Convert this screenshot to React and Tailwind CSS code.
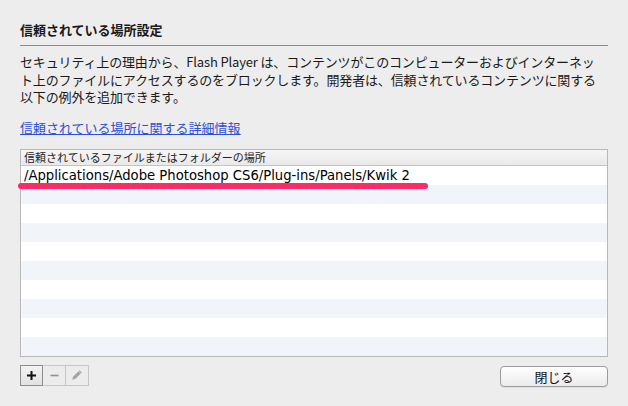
import React from 'react';

const JP = { fontFamily: '"Noto Sans CJK JP", "DejaVu Sans", sans-serif' };

function Rows() {
  const rows = Array.from({ length: 10 });
  return rows.map((_, i) => (
    <div key={i} className={`h-[19px] ${i % 2 ? 'bg-[#f1f4f9]' : 'bg-white'}`}>
      {i === 0 && (
        <p className="pl-[3px] text-[13.2px] leading-[19px] text-black whitespace-nowrap"
          style={{ fontFamily: '"DejaVu Sans", sans-serif' }}>
          /Applications/Adobe Photoshop CS6/Plug-ins/Panels/Kwik 2
        </p>
      )}
    </div>
  ));
}

export default function App() {
  return (
    <div className="relative w-[628px] h-[406px] bg-[#ededed] px-5 pt-5 text-[#1a1a1a]" style={JP}>
      {/* title */}
      <h1 className="h-[20px] leading-[20px] text-[13px] font-bold">信頼されている場所設定</h1>
      <div className="mt-[5px] h-px bg-[#8c8c8c]" />

      {/* description */}
      <p className="mt-[7px] text-[13px] leading-[17.5px] whitespace-nowrap tracking-[-0.15px]">
        セキュリティ上の理由から、Flash Player は、コンテンツがこのコンピューターおよびインターネッ<br />
        ト上のファイルにアクセスするのをブロックします。開発者は、信頼されているコンテンツに関する<br />
        以下の例外を追加できます。
      </p>

      <a href="#" className="block mt-[13px] w-fit text-[13px] leading-[18px] text-[#2d4fd6] underline">
        信頼されている場所に関する詳細情報
      </a>

      {/* table */}
      <div className="mt-[12px] w-[588px] border border-[#b8b8b8] bg-white">
        <div className="h-[16px] border-b border-[#c4c4c4] bg-gradient-to-b from-[#f6f6f6] to-[#e9e9e9] pl-[3px] text-[11px] leading-[15px] text-[#222]">
          信頼されているファイルまたはフォルダーの場所
        </div>
        <Rows />
      </div>

      {/* bottom bar */}
      <div className="mt-[8px] flex items-start justify-between">
        <div className="flex">
          <button className="w-[23px] h-[21px] border border-[#8e8e8e] bg-gradient-to-b from-[#f2f2f2] to-[#e2e2e2] flex items-center justify-center">
            <svg width="11" height="11" viewBox="0 0 11 11"><path d="M5.5 1v9M1 5.5h9" stroke="#111" strokeWidth="2" /></svg>
          </button>
          <button className="w-[23px] h-[21px] border border-l-0 border-[#c6c6c6] bg-[#ececec] flex items-center justify-center">
            <svg width="11" height="11" viewBox="0 0 11 11"><path d="M1.5 5.5h8" stroke="#8f8f8f" strokeWidth="1.6" /></svg>
          </button>
          <button className="w-[23px] h-[21px] border border-l-0 border-[#c6c6c6] bg-[#ececec] flex items-center justify-center">
            <svg width="12" height="12" viewBox="0 0 12 12">
              <path d="M8.6 1.2l2.2 2.2-6.6 6.6-2.9.7.7-2.9z" fill="#a3a3a3" />
              <path d="M7.6 2.2l2.2 2.2" stroke="#ececec" strokeWidth="0.8" />
            </svg>
          </button>
        </div>
        <button className="mt-px w-[108px] h-[21px] rounded-[4px] border border-[#9c9c9c] bg-gradient-to-b from-white to-[#ebebeb] text-[13px] leading-[19px] text-[#111] shadow-[0_1px_0_rgba(0,0,0,0.05)]">
          閉じる
        </button>
      </div>

      {/* highlighter mark */}
      <div className="absolute left-[18px] top-[183px] w-[410px] h-[6px] rounded-full bg-[#ff2a68]" />
    </div>
  );
}
